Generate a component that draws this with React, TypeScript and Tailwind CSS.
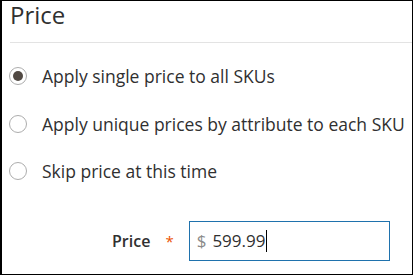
import React from "react";

function Radio({ checked }: { checked?: boolean }) {
  return (
    <span className="flex h-[18px] w-[18px] shrink-0 items-center justify-center rounded-full border border-[#adadad] bg-white">
      {checked && <span className="h-[10px] w-[10px] rounded-full bg-[#514943]" />}
    </span>
  );
}

export default function App() {
  const options = [
    { label: "Apply single price to all SKUs", checked: true },
    { label: "Apply unique prices by attribute to each SKU" },
    { label: "Skip price at this time" },
  ];
  return (
    <div className="h-[276px] w-[414px] bg-white">
      <div
        className="flex h-[275px] w-[413px] flex-col border-t border-r border-b border-l-2 border-black bg-white text-[#303030]"
        style={{ fontFamily: '"Open Sans", sans-serif' }}
      >
        <div className="ml-[8px] flex h-[42px] items-start border-b border-[#e3e3e3]">
          <h2 className="mt-0 text-[24px] leading-[28px] text-[#303030]">Price</h2>
        </div>
        <div className="mt-[23px] flex flex-col gap-[27.5px] pl-[7px]">
          {options.map((o) => (
            <label key={o.label} className="flex h-[20px] items-center gap-[15px]">
              <Radio checked={o.checked} />
              <span className="text-[17.5px] leading-[20px] text-[#303030]">{o.label}</span>
            </label>
          ))}
        </div>
        <div className="mt-[40px] flex items-center">
          <span className="ml-[110px] text-[16px] font-semibold text-[#303030]">Price</span>
          <span className="ml-[15px] text-[15px] text-[#eb5202]">*</span>
          <div className="ml-[15px] flex h-[40px] w-[201px] items-center border border-[#1f72ad] px-[7px] text-[17px]">
            <span className="text-[#8a8a8a]">$</span>
            <span className="ml-[6px] text-[#303030]">599.99</span>
            <span className="ml-[1px] h-[22px] w-px bg-black" />
          </div>
        </div>
      </div>
    </div>
  );
}
